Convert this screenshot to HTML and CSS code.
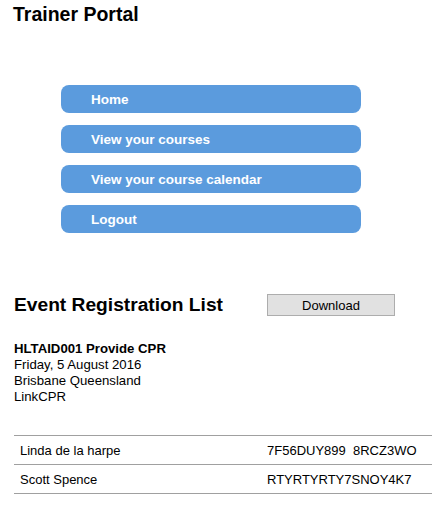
FILE: index.html
```html
<!DOCTYPE html>
<html>
<head>
<meta charset="utf-8">
<link rel="stylesheet" href="styles.css">
</head>
<body>
<h1 class="title">Trainer Portal</h1>
<nav class="menu">
  <a class="menu-item" href="#">Home</a>
  <a class="menu-item" href="#">View your courses</a>
  <a class="menu-item" href="#">View your course calendar</a>
  <a class="menu-item" href="#">Logout</a>
</nav>
<div class="list-head">
  <h2 class="list-title">Event Registration List</h2>
  <button class="download">Download</button>
</div>
<div class="event">
  <div class="event-name">HLTAID001 Provide CPR</div>
  <div>Friday, 5 August 2016</div>
  <div>Brisbane Queensland</div>
  <div>LinkCPR</div>
</div>
<table class="regs">
  <tr><td class="name">Linda de la harpe</td><td class="code">7F56DUY899&nbsp; 8RCZ3WO</td></tr>
  <tr><td class="name">Scott Spence</td><td class="code">RTYRTYRTY7SNOY4K7</td></tr>
</table>
</body>
</html>
```
FILE: styles.css
```css
html, body {
  margin: 0;
  padding: 0;
  background: #fff;
  overflow: hidden;
}
body {
  font-family: "Liberation Sans", Arial, sans-serif;
  color: #000;
  padding: 0 0 0 14px;
  width: 432px;
  box-sizing: border-box;
}
.title {
  font-size: 19.5px;
  font-weight: bold;
  margin: 0;
  padding-top: 3px;
  line-height: 22px;
  margin-left: -1px;
}
.menu {
  display: flex;
  flex-direction: column;
  gap: 12px;
  margin: 60px 0 0 47px;
  width: 300px;
}
.menu-item {
  display: block;
  height: 28px;
  line-height: 29px;
  background: #5b9bdd;
  color: #fff;
  font-weight: bold;
  font-size: 13.5px;
  text-decoration: none;
  border-radius: 8px;
  padding-left: 30px;
}
.list-head {
  display: flex;
  align-items: center;
  margin-top: 60px;
}
.list-title {
  margin: 0;
  font-size: 19.2px;
  font-weight: bold;
  width: 253px;
  line-height: 24px;
}
.download {
  width: 128px;
  height: 22px;
  background: #e1e1e1;
  border: 1px solid #adadad;
  font-family: "Liberation Sans", Arial, sans-serif;
  font-size: 13px;
  color: #000;
  padding: 0;
}
.event {
  margin-top: 24px;
  font-size: 13.2px;
  line-height: 16px;
}
.event-name {
  font-weight: bold;
}
.regs {
  margin-top: 30px;
  border-collapse: collapse;
  width: 418px;
  font-size: 13px;
}
.regs tr {
  border-top: 1px solid #a0a0a0;
  border-bottom: 1px solid #a0a0a0;
}
.regs td {
  height: 28px;
  padding: 0;
}
.name {
  padding-left: 6px !important;
  width: 247px;
}
```
